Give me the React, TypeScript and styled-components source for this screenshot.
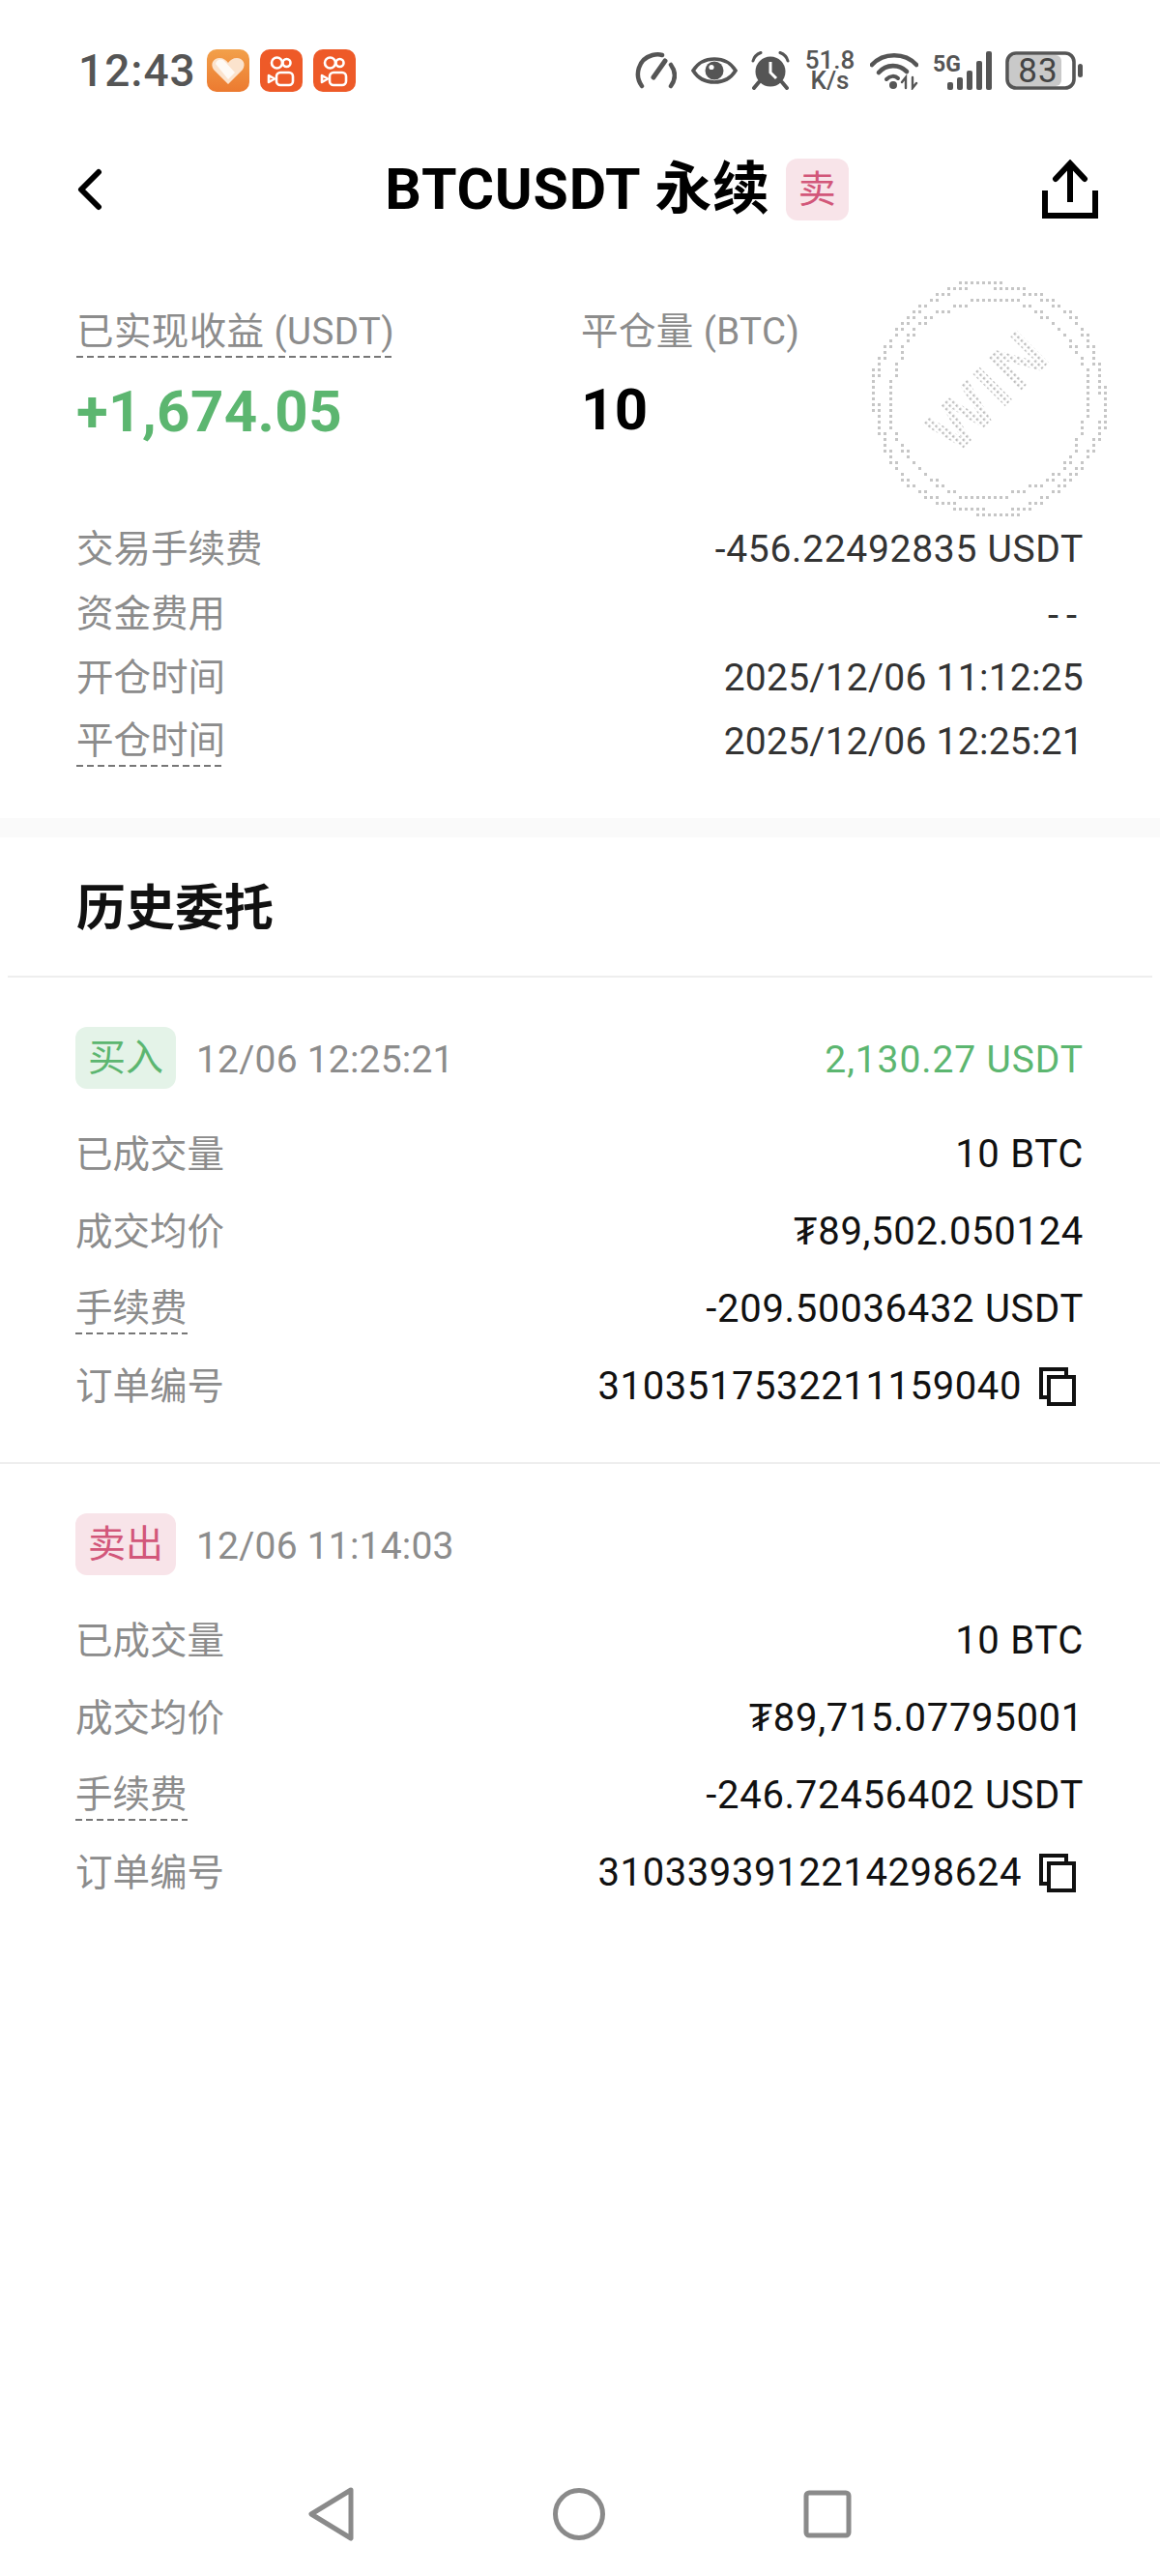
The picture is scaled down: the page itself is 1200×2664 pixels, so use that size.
import styled, { createGlobalStyle } from "styled-components";

const GREEN = "#5cb670";
const RED = "#d2577a";
const GREY = "#8c8c8c";

const GlobalStyle = createGlobalStyle`
	html, body {
		margin: 0;
		padding: 0;
		background: #fff;
	}
	body {
		font-family: Roboto, "Noto Sans CJK SC", sans-serif;
	}
`;

const Page = styled.div`
	width: 1200px;
	min-height: 2664px;
	display: flex;
	flex-direction: column;
	background: #fff;
	color: #111;
`;

const StatusBar = styled.div`
	height: 146px;
	flex: none;
	display: flex;
	align-items: center;
	justify-content: space-between;
	padding: 0 80px 0 81px;
	box-sizing: border-box;
`;

const StatusGroup = styled.div<{ $gap: number }>`
	display: flex;
	align-items: center;
	gap: ${(p) => p.$gap}px;
`;

const Clock = styled.span`
	font-size: 46px;
	font-weight: 500;
	letter-spacing: 1px;
	color: #555;
	line-height: 46px;
`;

const NetSpeed = styled.div`
	width: 54px;
	display: flex;
	flex-direction: column;
	align-items: center;
	color: #555;
	font-weight: 500;
	font-size: 26px;
	line-height: 21px;
`;

const Header = styled.header`
	height: 100px;
	flex: none;
	display: flex;
	align-items: center;
	justify-content: space-between;
	padding: 0 64px 0 80px;
	box-sizing: border-box;
`;

const TitleRow = styled.div`
	display: flex;
	align-items: center;
	gap: 16px;
	margin-left: 92px;
`;

const Title = styled.h1`
	margin: 0;
	font-size: 59px;
	font-weight: 700;
	letter-spacing: 0.8px;
	line-height: 66px;
	color: #000;
`;

const SideTag = styled.span<{ $buy?: boolean; $square?: boolean }>`
	display: flex;
	align-items: center;
	justify-content: center;
	height: 64px;
	width: ${(p) => (p.$square ? 65 : 104)}px;
	border-radius: 12px;
	font-size: 39px;
	line-height: 64px;
	color: ${(p) => (p.$buy ? GREEN : RED)};
	background: ${(p) => (p.$buy ? "#e4f3e8" : "#f8e4e9")};
`;

const Summary = styled.section`
	position: relative;
	padding: 72px 79px 45px 79px;
`;

const Stats = styled.div`
	display: flex;
`;

const Stat = styled.div<{ $width?: number }>`
	width: ${(p) => p.$width ?? 300}px;
	flex: none;
`;

const Label = styled.span<{ $hint?: boolean }>`
	display: inline-block;
	color: ${GREY};
	font-size: 38.5px;
	line-height: 50px;
	white-space: nowrap;
	padding-bottom: ${(p) => (p.$hint ? 2 : 0)}px;
	background-image: ${(p) =>
		p.$hint
			? `repeating-linear-gradient(90deg, #777 0 7px, transparent 7px 11px)`
			: "none"};
	background-size: 100% 2px;
	background-position: left bottom;
	background-repeat: no-repeat;
`;

const StatLabel = styled(Label)`
	letter-spacing: 0.4px;
`;

const StatValue = styled.div<{ $green?: boolean }>`
	margin-top: 21px;
	font-size: 60px;
	font-weight: 700;
	letter-spacing: 0.4px;
	line-height: 70px;
	color: ${(p) => (p.$green ? GREEN : "#000")};
`;

const SummaryRows = styled.div`
	margin-top: 74px;
`;

const SummaryRow = styled.div`
	height: 66.4px;
	display: flex;
	align-items: center;
	justify-content: space-between;
`;

const SummaryValue = styled.span<{ $spacing?: number; $dashes?: boolean }>`
	font-size: 39px;
	font-family: ${(p) => (p.$dashes ? `"Liberation Sans", sans-serif` : "inherit")};
	letter-spacing: ${(p) => p.$spacing ?? 0.25}px;
	color: #333;
`;

const Stamp = styled.svg`
	position: absolute;
	left: 897px;
	top: 40px;
	width: 250px;
	height: 250px;
`;

const Band = styled.div`
	height: 20px;
	flex: none;
	background: #fafafa;
`;

const SectionTitle = styled.h2`
	margin: 0;
	height: 143px;
	box-sizing: border-box;
	padding: 0 0 0 79px;
	font-size: 51px;
	font-weight: 700;
	line-height: 148px;
	color: #111;
`;

const Divider = styled.div<{ $inset?: boolean }>`
	height: 2px;
	flex: none;
	margin: 0 ${(p) => (p.$inset ? 8 : 0)}px;
	background: #eeeeee;
`;

const Order = styled.section`
	padding: 51px 79px 38px 78px;
`;

const OrderHead = styled.div`
	display: flex;
	align-items: center;
	height: 64px;
	margin-bottom: 28px;
`;

const OrderDate = styled.span`
	margin-left: 21px;
	padding-top: 4px;
	font-size: 39px;
	letter-spacing: 0.2px;
	color: ${GREY};
`;

const OrderAmount = styled.span`
	margin-left: auto;
	padding-top: 4px;
	font-size: 39px;
	letter-spacing: 0.9px;
	color: ${GREEN};
`;

const OrderRow = styled.div`
	height: 80px;
	display: flex;
	align-items: center;
	justify-content: space-between;
`;

const OrderValue = styled.span`
	display: flex;
	align-items: center;
	gap: 18px;
	font-size: 40px;
	letter-spacing: 0.7px;
	color: #111;
`;

const OrderId = styled(OrderValue)`
	padding-right: 8px;
	letter-spacing: 0.6px;
`;

const NavBar = styled.nav`
	margin-top: auto;
	height: 128px;
	flex: none;
	display: flex;
	align-items: center;
	justify-content: center;
	gap: 205px;
	padding-right: 2px;
`;

// two wobbling rings of dots on a 6px grid, like the stamp in the app
const stampDots = () => {
	const dots: { x: number; y: number }[] = [];
	for (let y = -126; y <= 126; y += 6) {
		for (let x = -126; x <= 126; x += 6) {
			const r = Math.hypot(x, y);
			const a = Math.atan2(y, x);
			const outer = Math.abs(r - (118 + 2 * Math.sin(6 * a))) < 3.8;
			const inner = Math.abs(r - (103 - 2 * Math.sin(6 * a))) < 2.8;
			if (outer || inner) dots.push({ x: x + 125, y: y + 125 });
		}
	}
	return dots;
};

const WinStamp = () => (
	<Stamp viewBox="0 0 250 250">
		<defs>
			<pattern id="stampDots" width="5" height="5" patternUnits="userSpaceOnUse">
				<rect width="2.4" height="2.4" fill="#bdbdbd" />
			</pattern>
		</defs>
		{stampDots().map((d) => (
			<rect key={`${d.x}-${d.y}`} x={d.x} y={d.y} width="3" height="3" fill="#c6c6c6" />
		))}
		<text
			x="125"
			y="142"
			textAnchor="middle"
			fontFamily="Liberation Sans"
			fontWeight="700"
			fontSize="70"
			letterSpacing="3"
			fill="url(#stampDots)"
			transform="rotate(-45 125 118)"
		>
			WIN
		</text>
	</Stamp>
);

const HeartIcon = () => (
	<svg width="44" height="44" viewBox="0 0 44 44">
		<defs>
			<linearGradient id="heartBg" x1="0" y1="0" x2="0" y2="1">
				<stop offset="0" stopColor="#f2a04a" />
				<stop offset="1" stopColor="#ec7a30" />
			</linearGradient>
		</defs>
		<rect width="44" height="44" rx="10" fill="url(#heartBg)" />
		<path
			d="M22 36 L7 21 C3 15 7 9 13 9 C17 9 20 11 22 14 C24 11 27 9 31 9 C37 9 41 15 37 21 Z"
			fill="#fbe3cd"
		/>
		<path d="M9 15 C10 10 16 9 19 13 L29 24 L22 31 Z" fill="#fff" opacity="0.8" />
	</svg>
);

const VideoAppIcon = () => (
	<svg width="44" height="44" viewBox="0 0 44 44">
		<rect width="44" height="44" rx="10" fill="#ee5a28" />
		<g fill="none" stroke="#fff" strokeWidth="2.6">
			<circle cx="17.5" cy="14" r="5.5" />
			<circle cx="27.5" cy="14" r="4" />
			<rect x="17" y="24" width="17" height="13" rx="4" />
			<path d="M9 27 L15 30.5 L9 34 Z" strokeLinejoin="round" />
		</g>
	</svg>
);

const GaugeIcon = () => (
	<svg width="43" height="38" viewBox="0 0 43 38" fill="none" stroke="#555" strokeLinecap="round">
		<path d="M7 35 C-1 24 3 7 18 3 C22 2 25 2 28 3" strokeWidth="4.5" />
		<path d="M37 13 C42 20 42 28 37 35" strokeWidth="4.5" />
		<path d="M19 26 L31 9" strokeWidth="5" />
	</svg>
);

const EyeIcon = () => (
	<svg width="48" height="30" viewBox="0 0 48 30">
		<path
			d="M2 15 C12 -1 36 -1 46 15 C36 31 12 31 2 15 Z"
			fill="none"
			stroke="#555"
			strokeWidth="3.6"
		/>
		<circle cx="24" cy="15" r="9.5" fill="#555" />
		<circle cx="21" cy="11.5" r="2.6" fill="#fff" />
	</svg>
);

const AlarmIcon = () => (
	<svg width="40" height="40" viewBox="0 0 40 40">
		<circle cx="20" cy="21" r="15.5" fill="#555" />
		<path d="M20 11 V22 L26 28" fill="none" stroke="#fff" strokeWidth="3" />
		<path d="M2 10 C3 6 6 3 10 1.5" fill="none" stroke="#555" strokeWidth="3" strokeLinecap="round" />
		<path d="M38 10 C37 6 34 3 30 1.5" fill="none" stroke="#555" strokeWidth="3" strokeLinecap="round" />
		<path d="M8 32 L3 38 M32 32 L37 38" stroke="#555" strokeWidth="4" strokeLinecap="round" />
	</svg>
);

const WifiIcon = () => (
	<svg width="50" height="40" viewBox="0 0 50 40" fill="none" stroke="#555" strokeLinecap="round">
		<path d="M2 14 C14 1 36 1 48 14" strokeWidth="4.6" />
		<path d="M9 22 C17 13 30 13 38 21" strokeWidth="4.6" />
		<path d="M17 29 C21 25 26 25 29 28" strokeWidth="4" />
		<circle cx="24" cy="35" r="4" fill="#555" stroke="none" />
		<path d="M37 38 V27 L33 32 M44 27 V38 L48 33" strokeWidth="2.4" />
	</svg>
);

const SignalIcon = () => (
	<svg width="61" height="40" viewBox="0 0 61 40">
		<text x="0" y="21" fontFamily="Liberation Sans Narrow, Roboto" fontWeight="700" fontSize="23" fill="#555">
			5G
		</text>
		<rect x="15" y="32" width="6" height="8" rx="2" fill="#555" />
		<rect x="25" y="27" width="6" height="13" rx="2" fill="#555" />
		<rect x="35" y="20" width="6" height="20" rx="2" fill="#555" />
		<rect x="45" y="10" width="6" height="30" rx="2" fill="#555" />
		<rect x="55" y="0" width="6" height="40" rx="2" fill="#555" />
	</svg>
);

const BatteryIcon = () => (
	<svg width="80" height="40" viewBox="0 0 80 40">
		<rect x="4" y="4" width="54" height="32" rx="6" fill="#c9c9c9" />
		<rect x="2" y="2" width="69" height="36" rx="9" fill="none" stroke="#555" strokeWidth="3.6" />
		<rect x="75" y="13" width="5" height="14" rx="2.5" fill="#555" />
		<text x="34" y="32" textAnchor="middle" fontFamily="Roboto" fontSize="35" letterSpacing="1" fill="#444">
			83
		</text>
	</svg>
);

const BackIcon = () => (
	<svg width="26" height="44" viewBox="0 0 26 44">
		<path
			d="M22 4 L4 22 L22 40"
			fill="none"
			stroke="#000"
			strokeWidth="6"
			strokeLinecap="round"
			strokeLinejoin="round"
		/>
	</svg>
);

const ShareIcon = () => (
	<svg width="58" height="62" viewBox="0 0 58 62" fill="none" stroke="#000" strokeWidth="6">
		<path d="M29 4 V44" />
		<path d="M14 20 L29 4 L44 20" strokeLinecap="round" />
		<path d="M3 32 V58 H55 V32" />
	</svg>
);

const CopyIcon = () => (
	<svg width="38" height="40" viewBox="0 0 38 40" fill="none" stroke="#111" strokeWidth="4">
		<path d="M10 31 H2 V2 H28 V9" />
		<rect x="10" y="10" width="26" height="28" />
	</svg>
);

const NavBack = () => (
	<svg width="50" height="60" viewBox="0 0 50 60">
		<path
			d="M46 5 L5 30 L46 55 Z"
			fill="none"
			stroke="#8a8a8a"
			strokeWidth="5"
			strokeLinejoin="round"
		/>
	</svg>
);

const NavHome = () => (
	<svg width="54" height="54" viewBox="0 0 54 54">
		<circle cx="27" cy="27" r="24.5" fill="none" stroke="#8a8a8a" strokeWidth="5" />
	</svg>
);

const NavRecent = () => (
	<svg width="50" height="50" viewBox="0 0 50 50">
		<rect x="3" y="3" width="44" height="44" rx="3" fill="none" stroke="#8a8a8a" strokeWidth="5" />
	</svg>
);

interface OrderInfo {
	side: "buy" | "sell";
	date: string;
	amount?: string;
	volume: string;
	price: string;
	fee: string;
	id: string;
}

const orders: OrderInfo[] = [
	{
		side: "buy",
		date: "12/06 12:25:21",
		amount: "2,130.27 USDT",
		volume: "10 BTC",
		price: "₮89,502.050124",
		fee: "-209.50036432 USDT",
		id: "3103517532211159040",
	},
	{
		side: "sell",
		date: "12/06 11:14:03",
		volume: "10 BTC",
		price: "₮89,715.07795001",
		fee: "-246.72456402 USDT",
		id: "3103393912214298624",
	},
];

const OrderBlock = ({ order }: { order: OrderInfo }) => (
	<Order>
		<OrderHead>
			<SideTag $buy={order.side === "buy"}>{order.side === "buy" ? "买入" : "卖出"}</SideTag>
			<OrderDate>{order.date}</OrderDate>
			{order.amount && <OrderAmount>{order.amount}</OrderAmount>}
		</OrderHead>
		<OrderRow>
			<Label>已成交量</Label>
			<OrderValue>{order.volume}</OrderValue>
		</OrderRow>
		<OrderRow>
			<Label>成交均价</Label>
			<OrderValue>{order.price}</OrderValue>
		</OrderRow>
		<OrderRow>
			<Label $hint>手续费</Label>
			<OrderValue>{order.fee}</OrderValue>
		</OrderRow>
		<OrderRow>
			<Label>订单编号</Label>
			<OrderId>
				{order.id}
				<CopyIcon />
			</OrderId>
		</OrderRow>
	</Order>
);

export default function App() {
	return (
		<Page>
			<GlobalStyle />
			<StatusBar>
				<StatusGroup $gap={11}>
					<Clock>12:43</Clock>
					<HeartIcon />
					<VideoAppIcon />
					<VideoAppIcon />
				</StatusGroup>
				<StatusGroup $gap={14.5}>
					<GaugeIcon />
					<EyeIcon />
					<AlarmIcon />
					<NetSpeed>
						<span>51.8</span>
						<span>K/s</span>
					</NetSpeed>
					<WifiIcon />
					<SignalIcon />
					<BatteryIcon />
				</StatusGroup>
			</StatusBar>
			<Header>
				<BackIcon />
				<TitleRow>
					<Title>BTCUSDT 永续</Title>
					<SideTag $square>卖</SideTag>
				</TitleRow>
				<ShareIcon />
			</Header>
			<Summary>
				<WinStamp />
				<Stats>
					<Stat $width={522}>
						<StatLabel $hint>已实现收益 (USDT)</StatLabel>
						<StatValue $green>+1,674.05</StatValue>
					</Stat>
					<Stat>
						<StatLabel>平仓量 (BTC)</StatLabel>
						<StatValue>10</StatValue>
					</Stat>
				</Stats>
				<SummaryRows>
					<SummaryRow>
						<Label>交易手续费</Label>
						<SummaryValue $spacing={0.7}>-456.22492835 USDT</SummaryValue>
					</SummaryRow>
					<SummaryRow>
						<Label>资金费用</Label>
						<SummaryValue $dashes $spacing={6}>
							--
						</SummaryValue>
					</SummaryRow>
					<SummaryRow>
						<Label>开仓时间</Label>
						<SummaryValue>2025/12/06 11:12:25</SummaryValue>
					</SummaryRow>
					<SummaryRow>
						<Label $hint>平仓时间</Label>
						<SummaryValue>2025/12/06 12:25:21</SummaryValue>
					</SummaryRow>
				</SummaryRows>
			</Summary>
			<Band />
			<SectionTitle>历史委托</SectionTitle>
			<Divider $inset />
			<OrderBlock order={orders[0]} />
			<Divider />
			<OrderBlock order={orders[1]} />
			<NavBar>
				<NavBack />
				<NavHome />
				<NavRecent />
			</NavBar>
		</Page>
	);
}
